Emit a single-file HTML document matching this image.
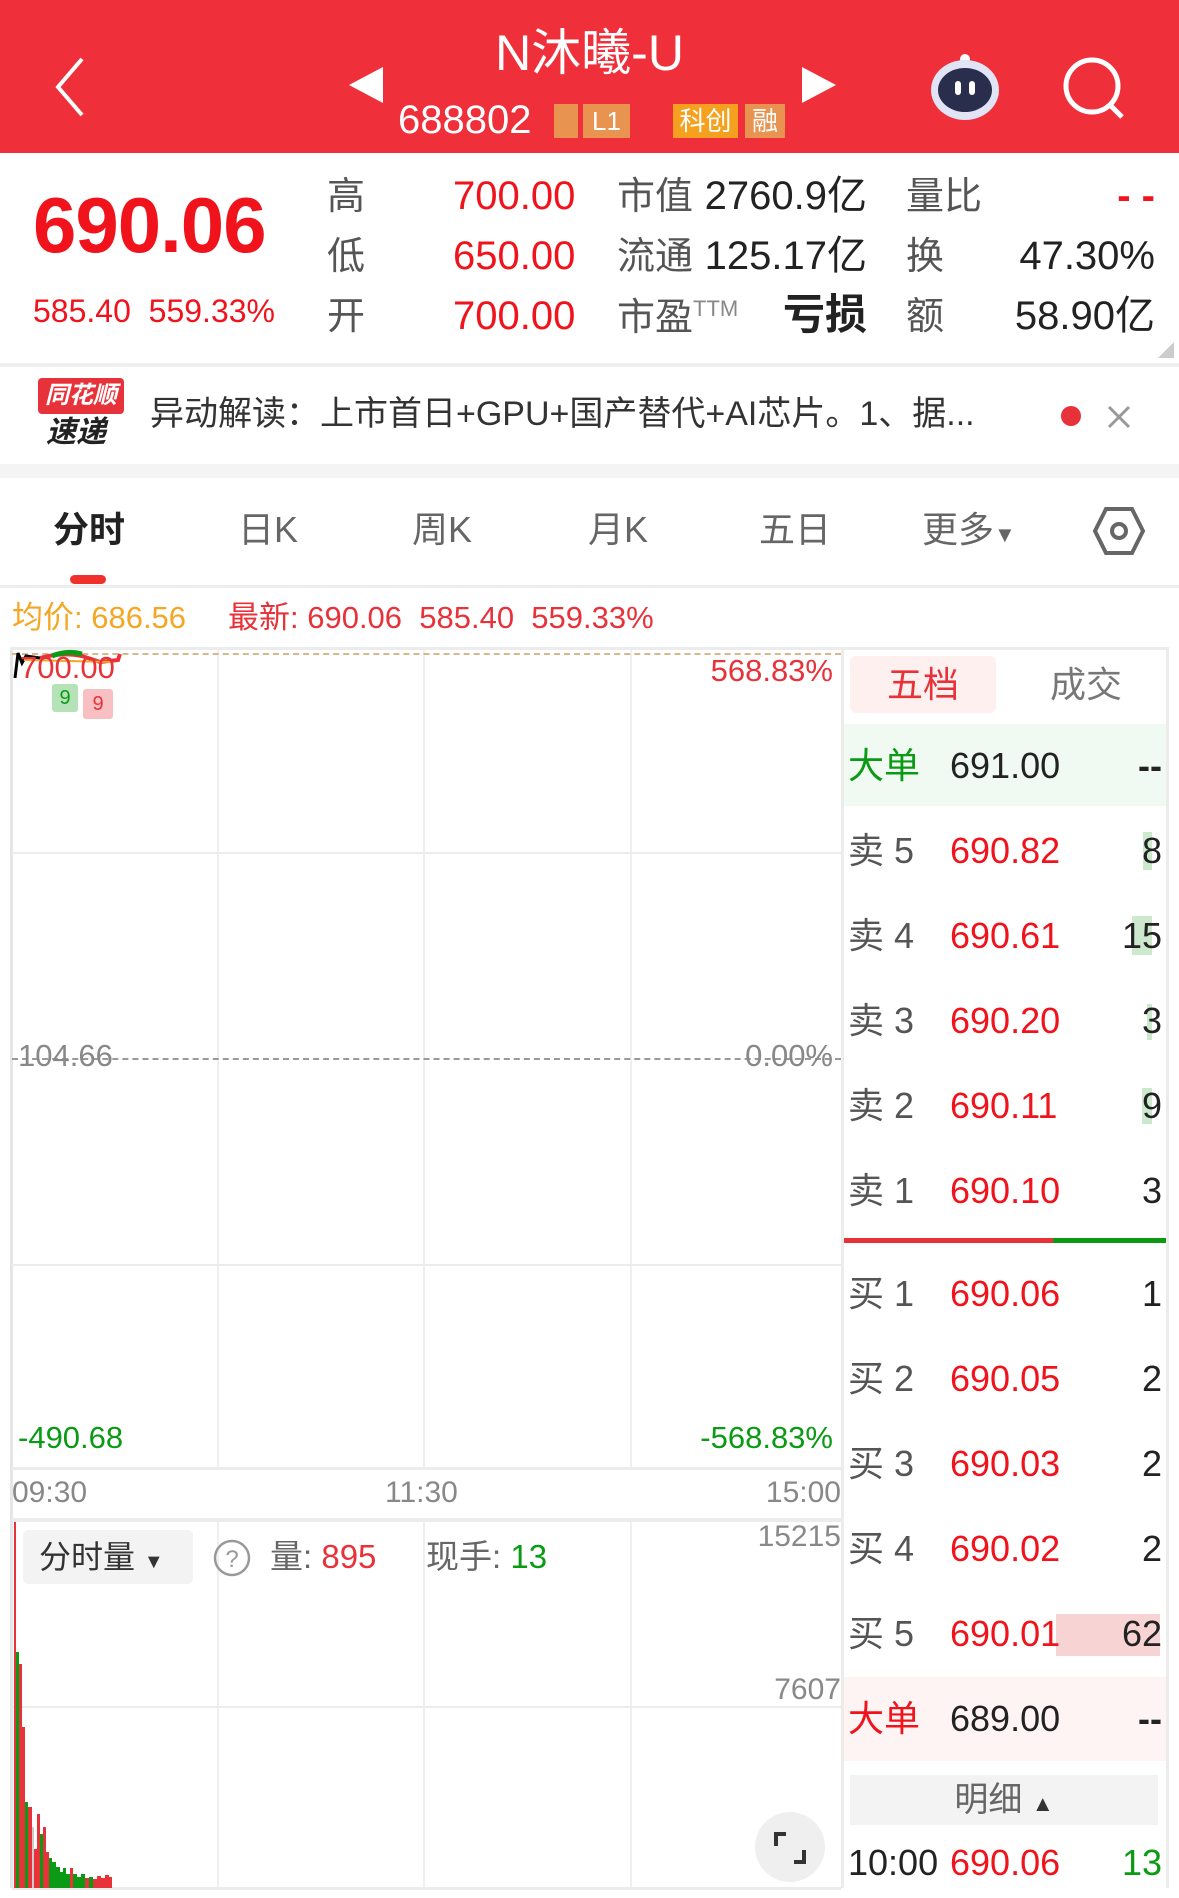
<!DOCTYPE html>
<html><head><meta charset="utf-8">
<style>
*{margin:0;padding:0;box-sizing:border-box}
body{width:1179px;height:1898px;position:relative;background:#fff;font-family:"Liberation Sans","Noto Sans CJK SC",sans-serif;overflow:hidden}
.a{position:absolute;white-space:nowrap;line-height:1}
.r{color:#f0131c}.g{color:#0a9a14}.k{color:#222}.gr{color:#555}
.hl{position:absolute;height:2px;background:#ececec}
.vl{position:absolute;width:2px;background:#efefef}
</style></head><body>
<div class="a" style="left:0;top:0;width:1179px;height:153px;background:#ef303a"></div>
<svg class="a" style="left:50px;top:55px" width="40" height="62"><path d="M32 4 L8 32 L32 60" stroke="#fff" stroke-width="4" fill="none"/></svg>
<svg class="a" style="left:345px;top:65px" width="40" height="40"><path d="M38 2 L4 20 L38 38Z" fill="#fff"/></svg>
<svg class="a" style="left:800px;top:65px" width="40" height="40"><path d="M2 2 L36 20 L2 38Z" fill="#fff"/></svg>
<div class="a" style="left:0;width:1179px;text-align:center;top:28px;font-size:50px;color:#fff">N沐曦-U</div>
<div class="a" style="left:398px;top:100px;font-size:40px;color:#fff">688802</div>
<div class="a" style="left:554px;top:104px;width:24px;height:34px;background:#e8934f"></div>
<div class="a" style="left:583px;top:104px;width:47px;height:34px;background:#e8934f;color:#fff;font-size:26px;text-align:center;line-height:34px">L1</div>
<div class="a" style="left:673px;top:104px;width:65px;height:34px;background:#f5a11f;color:#fff;font-size:26px;text-align:center;line-height:34px">科创</div>
<div class="a" style="left:745px;top:104px;width:40px;height:34px;background:#e8934f;color:#fff;font-size:26px;text-align:center;line-height:34px">融</div>
<svg class="a" style="left:925px;top:45px" width="75" height="75"><circle cx="40" cy="14" r="5" fill="#fff"/><rect x="37" y="14" width="6" height="12" fill="#fff"/><ellipse cx="40" cy="45" rx="34" ry="30" fill="#e0e4f5"/><ellipse cx="40" cy="45" rx="27" ry="22" fill="#2a2e4d"/><rect x="30" y="36" width="6" height="14" rx="3" fill="#fff"/><rect x="44" y="36" width="6" height="14" rx="3" fill="#fff"/></svg>
<svg class="a" style="left:1060px;top:55px" width="70" height="70"><circle cx="32" cy="31" r="26" stroke="#fff" stroke-width="5" fill="none"/><path d="M50 50 L62 62" stroke="#fff" stroke-width="5"/></svg>
<div class="a r" style="left:33px;top:186px;font-size:78px;font-weight:bold;letter-spacing:-1px">690.06</div>
<div class="a r" style="left:33px;top:295px;font-size:32px">585.40&nbsp;&nbsp;559.33%</div>
<div class="a gr" style="left:327px;top:178px;font-size:38px">高</div>
<div class="a gr" style="left:327px;top:238px;font-size:38px">低</div>
<div class="a gr" style="left:327px;top:298px;font-size:38px">开</div>
<div class="a r" style="left:453px;top:176px;font-size:40px">700.00</div>
<div class="a r" style="left:453px;top:236px;font-size:40px">650.00</div>
<div class="a r" style="left:453px;top:296px;font-size:40px">700.00</div>
<div class="a gr" style="left:617px;top:178px;font-size:38px">市值</div>
<div class="a gr" style="left:617px;top:238px;font-size:38px">流通</div>
<div class="a gr" style="left:617px;top:298px;font-size:38px">市盈<span style="font-size:22px;vertical-align:14px;color:#888">TTM</span></div>
<div class="a k" style="right:312px;top:176px;font-size:40px">2760.9亿</div>
<div class="a k" style="right:312px;top:236px;font-size:40px">125.17亿</div>
<div class="a k" style="right:312px;top:294px;font-size:42px;font-weight:bold">亏损</div>
<div class="a gr" style="left:906px;top:178px;font-size:38px">量比</div>
<div class="a gr" style="left:906px;top:238px;font-size:38px">换</div>
<div class="a gr" style="left:906px;top:298px;font-size:38px">额</div>
<div class="a r" style="right:24px;top:176px;font-size:40px;font-weight:bold">- -</div>
<div class="a k" style="right:24px;top:236px;font-size:40px">47.30%</div>
<div class="a k" style="right:24px;top:296px;font-size:40px">58.90亿</div>
<svg class="a" style="left:1158px;top:342px" width="16" height="16"><path d="M16 0 L16 16 L0 16Z" fill="#ccc"/></svg>
<div class="a" style="left:0;top:363px;width:1179px;height:4px;background:#eee"></div>
<div class="a" style="left:38px;top:378px;width:86px;height:36px;background:#e8323a;border-radius:4px;color:#fff;font-size:24px;font-weight:bold;font-style:italic;text-align:center;line-height:36px">同花顺</div>
<div class="a" style="left:46px;top:418px;font-size:30px;font-weight:bold;font-style:italic;color:#222">速递</div>
<div class="a" style="left:150px;top:397px;font-size:34px;color:#333">异动解读：上市首日+GPU+国产替代+AI芯片。1、据...</div>
<div class="a" style="left:1061px;top:406px;width:20px;height:20px;border-radius:50%;background:#e8323a"></div>
<svg class="a" style="left:1107px;top:405px" width="24" height="24"><path d="M2 2L22 22M22 2L2 22" stroke="#999" stroke-width="3"/></svg>
<div class="a" style="left:0;top:464px;width:1179px;height:14px;background:#f4f4f4"></div>
<div class="a k" style="left:53px;top:512px;font-size:36px;font-weight:bold">分时</div>
<div class="a gr" style="left:238px;top:512px;font-size:36px;color:#666">日K</div>
<div class="a gr" style="left:412px;top:512px;font-size:36px;color:#666">周K</div>
<div class="a gr" style="left:588px;top:512px;font-size:36px;color:#666">月K</div>
<div class="a gr" style="left:759px;top:512px;font-size:36px;color:#666">五日</div>
<div class="a gr" style="left:922px;top:512px;font-size:36px;color:#666">更多<span style="font-size:22px">▼</span></div>
<svg class="a" style="left:1092px;top:506px" width="54" height="50"><path d="M14 3 L40 3 L51 25 L40 47 L14 47 L3 25Z" stroke="#666" stroke-width="4" fill="none"/><circle cx="27" cy="25" r="7" stroke="#666" stroke-width="4" fill="none"/></svg>
<div class="a" style="left:70px;top:575px;width:36px;height:9px;border-radius:5px;background:#f0302c"></div>
<div class="a" style="left:0;top:585px;width:1179px;height:3px;background:#eee"></div>
<div class="a" style="left:12px;top:602px;font-size:31px;color:#f5a623">均价: 686.56</div>
<div class="a r" style="left:228px;top:602px;font-size:31px;color:#e8323a">最新: 690.06&nbsp;&nbsp;585.40&nbsp;&nbsp;559.33%</div>
<div class="hl" style="left:10px;top:647px;width:1159px;height:3px"></div>
<div class="vl" style="left:10px;top:650px;height:1238px;width:3px;background:#e6e6e6"></div>
<div class="vl" style="left:217px;top:650px;height:818px"></div>
<div class="vl" style="left:423px;top:650px;height:818px"></div>
<div class="vl" style="left:630px;top:650px;height:818px"></div>
<div class="vl" style="left:217px;top:1522px;height:366px"></div>
<div class="vl" style="left:423px;top:1522px;height:366px"></div>
<div class="vl" style="left:630px;top:1522px;height:366px"></div>
<div class="hl" style="left:12px;top:852px;width:829px"></div>
<div class="hl" style="left:12px;top:1264px;width:829px"></div>
<div class="hl" style="left:12px;top:1467px;width:829px;height:3px"></div>
<div class="hl" style="left:12px;top:1518px;width:829px;height:4px"></div>
<div class="hl" style="left:12px;top:1706px;width:829px"></div>
<div class="hl" style="left:12px;top:1887px;width:829px;height:3px"></div>
<div class="a" style="left:12px;top:653px;width:829px;border-top:2px dashed #d8b88a"></div>
<div class="a" style="left:12px;top:1058px;width:829px;border-top:2px dashed #999"></div>
<svg class="a" style="left:12px;top:648px" width="110" height="40"><path d="M3 30 L6 5 L10 15 L14 8 L28 10" stroke="#000" stroke-width="3" fill="none"/><path d="M28 10 Q50 4 70 8 L88 14 L106 12 L108 6" stroke="#e8323a" stroke-width="4" fill="none"/><path d="M40 8 Q55 2 70 6" stroke="#0a9a14" stroke-width="5" fill="none"/><path d="M12 12 L100 14" stroke="#f5a623" stroke-width="2" fill="none"/></svg>
<div class="a" style="left:20px;top:652px;font-size:31px;color:#e8323a">700.00</div>
<div class="a" style="left:52px;top:684px;width:26px;height:28px;background:#b6e2b8;border-radius:3px;color:#0a9a14;font-size:20px;text-align:center;line-height:28px">9</div>
<div class="a" style="left:83px;top:689px;width:30px;height:30px;background:#f8c0c3;border-radius:3px;color:#e8323a;font-size:20px;text-align:center;line-height:30px">9</div>
<div class="a" style="right:346px;top:655px;font-size:31px;color:#e8323a">568.83%</div>
<div class="a" style="left:18px;top:1040px;font-size:31px;color:#888;background:linear-gradient(transparent 47%,#fff 47%,#fff 53%,transparent 53%)">104.66</div>
<div class="a" style="right:346px;top:1040px;font-size:31px;color:#888">0.00%</div>
<div class="a g" style="left:18px;top:1422px;font-size:31px">-490.68</div>
<div class="a g" style="right:346px;top:1422px;font-size:31px">-568.83%</div>
<div class="a" style="left:12px;top:1478px;font-size:30px;color:#888">09:30</div>
<div class="a" style="left:385px;top:1478px;font-size:30px;color:#888">11:30</div>
<div class="a" style="right:338px;top:1478px;font-size:30px;color:#888">15:00</div>
<div class="a" style="left:23px;top:1530px;width:170px;height:54px;background:#f3f3f3;border-radius:5px;font-size:32px;color:#333;line-height:54px;padding-left:16px">分时量 <span style="font-size:20px">▼</span></div>
<svg class="a" style="left:212px;top:1538px" width="40" height="40"><circle cx="20" cy="20" r="17" stroke="#999" stroke-width="2.5" fill="none"/><text x="20" y="29" font-size="24" text-anchor="middle" fill="#999" font-family="Liberation Sans">?</text></svg>
<div class="a" style="left:270px;top:1540px;font-size:33px;color:#666">量: <span class="r" style="color:#e8323a">895</span></div>
<div class="a" style="left:426px;top:1540px;font-size:33px;color:#666">现手: <span class="g">13</span></div>
<div class="a" style="right:338px;top:1522px;font-size:30px;color:#888">15215</div>
<div class="a" style="right:338px;top:1675px;font-size:30px;color:#888">7607</div>
<svg class="a" style="left:12px;top:1522px" width="120" height="366">
<rect x="2" y="0" width="2" height="366" fill="#e8323a"/>
<rect x="4" y="130" width="3" height="236" fill="#0a9a14"/><rect x="7" y="142" width="3" height="224" fill="#e8323a"/>
<rect x="10" y="205" width="3" height="161" fill="#e8323a"/><rect x="13" y="280" width="3" height="86" fill="#0a9a14"/>
<rect x="16" y="285" width="4" height="81" fill="#e8323a"/><rect x="20" y="305" width="2" height="61" fill="#ccc"/>
<rect x="22" y="327" width="3" height="39" fill="#e8323a"/><rect x="25" y="292" width="3" height="74" fill="#e8323a"/>
<rect x="28" y="312" width="3" height="54" fill="#0a9a14"/><rect x="31" y="305" width="3" height="61" fill="#e8323a"/>
<rect x="34" y="330" width="3" height="36" fill="#e8323a"/><rect x="37" y="336" width="3" height="30" fill="#0a9a14"/>
<rect x="40" y="340" width="4" height="26" fill="#0a9a14"/><rect x="44" y="345" width="4" height="21" fill="#0a9a14"/>
<rect x="48" y="350" width="3" height="16" fill="#0a9a14"/><rect x="51" y="346" width="3" height="20" fill="#0a9a14"/>
<rect x="54" y="352" width="4" height="14" fill="#0a9a14"/><rect x="58" y="346" width="3" height="20" fill="#e8323a"/>
<rect x="61" y="352" width="4" height="14" fill="#0a9a14"/><rect x="65" y="355" width="4" height="11" fill="#0a9a14"/>
<rect x="69" y="352" width="4" height="14" fill="#0a9a14"/><rect x="73" y="356" width="4" height="10" fill="#e8323a"/>
<rect x="77" y="355" width="4" height="11" fill="#0a9a14"/><rect x="81" y="357" width="4" height="9" fill="#e8323a"/>
<rect x="85" y="354" width="4" height="12" fill="#e8323a"/><rect x="89" y="356" width="4" height="10" fill="#e8323a"/><rect x="93" y="353" width="4" height="13" fill="#e8323a"/><rect x="97" y="355" width="3" height="11" fill="#e8323a"/>
</svg>
<div class="a" style="left:755px;top:1812px;width:70px;height:70px;border-radius:50%;background:#efefef"></div>
<svg class="a" style="left:772px;top:1830px" width="36" height="36"><path d="M4 16 L4 4 L14 4 M32 20 L32 32 L22 32" stroke="#333" stroke-width="4" fill="none"/></svg>
<div class="vl" style="left:841px;top:650px;height:1238px;width:3px;background:#ececec"></div>
<div class="vl" style="left:1166px;top:650px;height:1238px;width:3px;background:#ececec"></div>
<div class="a" style="left:850px;top:656px;width:146px;height:57px;background:#fff0f0;border-radius:6px;color:#e8323a;font-size:36px;text-align:center;line-height:57px">五档</div>
<div class="a" style="left:1050px;top:667px;font-size:36px;color:#777">成交</div>
<div class="a" style="left:844px;top:724px;width:322px;height:82px;background:#f0f9f2"></div>
<div class="a" style="left:844px;top:1677px;width:322px;height:84px;background:#fff4f4"></div>
<div class="a" style="left:1056px;top:1614px;width:104px;height:42px;background:#f8d3d4"></div>
<div class="a" style="left:1143px;top:832px;width:9px;height:38px;background:#cce9cd"></div>
<div class="a" style="left:1132px;top:916px;width:20px;height:39px;background:#cce9cd"></div>
<div class="a" style="left:1147px;top:1004px;width:5px;height:36px;background:#cce9cd"></div>
<div class="a" style="left:1142px;top:1088px;width:10px;height:36px;background:#cce9cd"></div>
<div class="a" style="left:844px;top:1238px;width:209px;height:5px;background:#e8323a"></div>
<div class="a" style="left:1053px;top:1238px;width:113px;height:5px;background:#0a9a14"></div>
<div style="position:absolute;left:848px;top:0;width:314px;font-size:36px">
<div class="a g" style="left:0;top:748px">大单</div><div class="a k" style="left:102px;top:748px">691.00</div><div class="a k" style="right:0;top:748px;font-weight:bold">--</div>
<div class="a gr" style="left:0;top:833px">卖 5</div><div class="a r" style="left:102px;top:833px">690.82</div><div class="a k" style="right:0;top:833px">8</div>
<div class="a gr" style="left:0;top:918px">卖 4</div><div class="a r" style="left:102px;top:918px">690.61</div><div class="a k" style="right:0;top:918px">15</div>
<div class="a gr" style="left:0;top:1003px">卖 3</div><div class="a r" style="left:102px;top:1003px">690.20</div><div class="a k" style="right:0;top:1003px">3</div>
<div class="a gr" style="left:0;top:1088px">卖 2</div><div class="a r" style="left:102px;top:1088px">690.11</div><div class="a k" style="right:0;top:1088px">9</div>
<div class="a gr" style="left:0;top:1173px">卖 1</div><div class="a r" style="left:102px;top:1173px">690.10</div><div class="a k" style="right:0;top:1173px">3</div>
<div class="a gr" style="left:0;top:1276px">买 1</div><div class="a r" style="left:102px;top:1276px">690.06</div><div class="a k" style="right:0;top:1276px">1</div>
<div class="a gr" style="left:0;top:1361px">买 2</div><div class="a r" style="left:102px;top:1361px">690.05</div><div class="a k" style="right:0;top:1361px">2</div>
<div class="a gr" style="left:0;top:1446px">买 3</div><div class="a r" style="left:102px;top:1446px">690.03</div><div class="a k" style="right:0;top:1446px">2</div>
<div class="a gr" style="left:0;top:1531px">买 4</div><div class="a r" style="left:102px;top:1531px">690.02</div><div class="a k" style="right:0;top:1531px">2</div>
<div class="a gr" style="left:0;top:1616px">买 5</div><div class="a r" style="left:102px;top:1616px">690.01</div><div class="a k" style="right:0;top:1616px">62</div>
<div class="a r" style="left:0;top:1701px">大单</div><div class="a k" style="left:102px;top:1701px">689.00</div><div class="a k" style="right:0;top:1701px;font-weight:bold">--</div>
<div class="a k" style="left:0;top:1845px">10:00</div><div class="a r" style="left:102px;top:1845px">690.06</div><div class="a g" style="right:0;top:1845px">13</div>
</div>
<div class="a" style="left:850px;top:1775px;width:308px;height:50px;background:#f3f3f3;color:#666;font-size:34px;text-align:center;line-height:50px">明细 <span style="font-size:22px;color:#333">▲</span></div>
</body></html>
